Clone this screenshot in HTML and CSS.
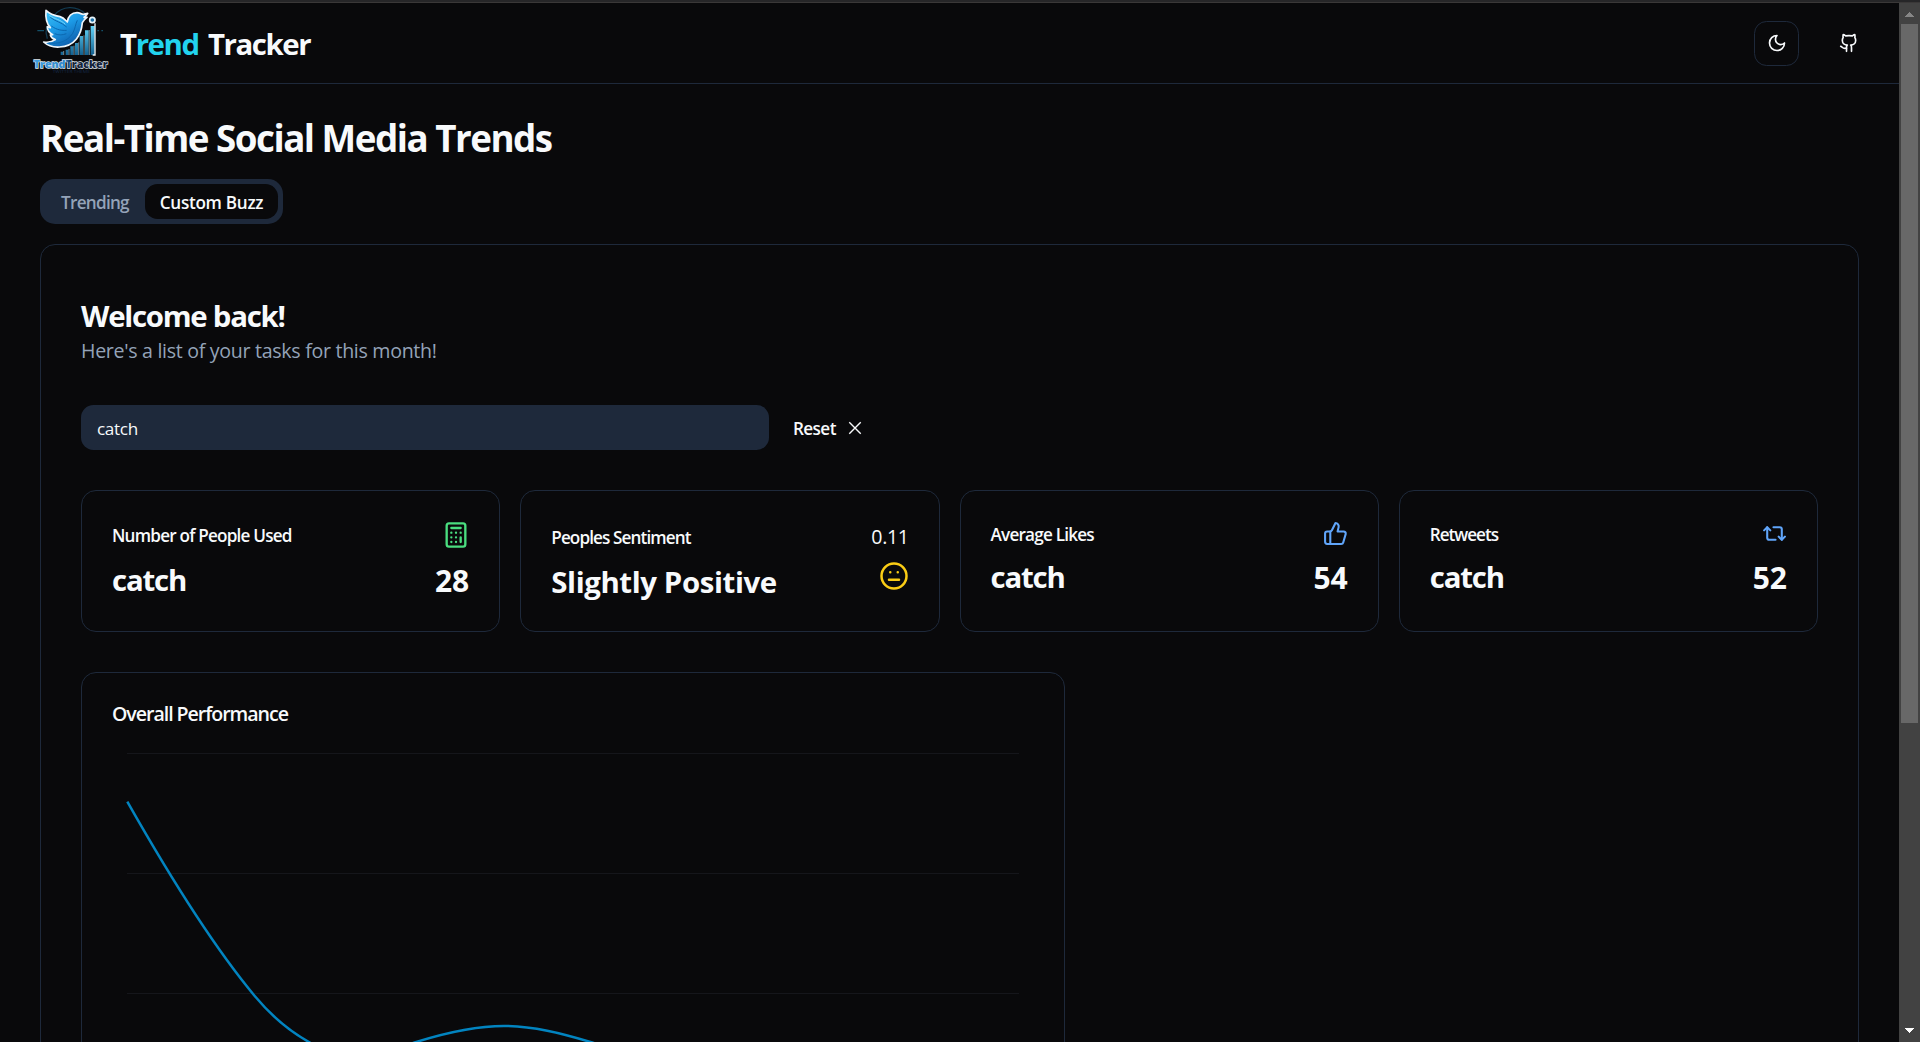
FILE: index.html
```
<!DOCTYPE html>
<html lang="en">
<head>
<meta charset="utf-8">
<title>Trend Tracker</title>
<link rel="stylesheet" href="styles.css">
</head>
<body>
<div class="window-edge"></div>
<div class="viewport">
  <div class="page">
    <header class="site-header">
      <svg class="logo" viewBox="33 24 234 198">
        <defs>
          <linearGradient id="bird" x1="0" y1="0" x2="0.6" y2="1">
            <stop offset="0" stop-color="#3cc4f8"/><stop offset="0.5" stop-color="#1c9ae6"/><stop offset="1" stop-color="#0d5aa8"/>
          </linearGradient>
          <linearGradient id="bars" x1="0" y1="0" x2="0" y2="1">
            <stop offset="0" stop-color="#62d4fa"/><stop offset="1" stop-color="#12608f"/>
          </linearGradient>
          <linearGradient id="word" x1="0" y1="0" x2="1" y2="0">
            <stop offset="0" stop-color="#3f9fe0"/><stop offset="0.42" stop-color="#2f86cc"/><stop offset="0.5" stop-color="#17243c"/><stop offset="1" stop-color="#14203a"/>
          </linearGradient>
        </defs>
        <path d="M103 46A62 62 0 0 1 196 42M80 80a66 66 0 0 0 2 36" fill="none" stroke="#123a50" stroke-width="4"/>
        <path d="M52 92h20M232 92h5M244 92h5" stroke="#145069" stroke-width="4"/>
        <g fill="url(#bars)">
          <path d="M122 155h7v10h-7zM137 149h8v16h-8zM151 139h9v26h-9zM165 129h9v36h-9zM179 108h10v57h-10zM195 91h11v74h-11zM212 78h12v87h-12z"/>
        </g>
        <path d="M131 165v-12M147 165v-18M162 165v-28M176 165v-38M192 165v-59M208 165V90" stroke="#a9cfe0" stroke-width="2"/>
        <path d="M225 70v95h-7" fill="none" stroke="#eef6fa" stroke-width="4"/>
        <circle cx="217" cy="60" r="8" fill="#1a6fa8" stroke="#e8f4fa" stroke-width="5"/>
        <path d="M78 31C90 43 105 47 120 50C131 53 136 60 142 66C144 49 155 38 171 38C180 38 184 43 190 43L203 40C200 46 196 48 192 52C196 52 199 51 201 52C195 56 191 61 187 68C184 103 166 139 118 141C100 142 84 138 71 126C83 128 96 126 106 119C99 117 93 112 91 105L98 104C88 98 82 90 82 80L91 83C80 71 76 53 78 31Z" fill="url(#bird)" stroke="#eef5fa" stroke-width="5" stroke-linejoin="round"/>
        <path d="M91 52c14 12 34 15 49 29M94 78c17 12 31 14 46 13M104 101c13 6 25 4 35 0M86 129c27 4 57-4 72-29c8-14 8-27 14-39" fill="none" stroke="#0b68b0" stroke-width="3"/>
        <path d="M88 46c16 12 33 12 48 27" fill="none" stroke="#7bdcfb" stroke-width="3"/>
        <text class="logo-word" x="41" y="204" textLength="222" lengthAdjust="spacingAndGlyphs">TrendTracker</text>
        <text class="logo-tag" x="98" y="219" textLength="112" lengthAdjust="spacingAndGlyphs">TWITTER THEME</text>
      </svg>
      <div class="brand"><span>T</span><span class="brand-accent">rend</span> <span>Tracker</span></div>
      <nav class="actions">
        <button class="icon-button outlined" aria-label="Theme">
          <svg class="icon i20" viewBox="0 0 24 24"><path d="M12 3a6 6 0 0 0 9 9 9 9 0 1 1-9-9Z"/></svg>
        </button>
        <button class="icon-button" aria-label="GitHub">
          <svg class="icon i20" viewBox="0 0 24 24"><path d="M15 22v-4a4.8 4.8 0 0 0-1-3.500c3 0 6-2 6-5.500.08-1.250-.27-2.480-1-3.500.28-1.150.28-2.350 0-3.500 0 0-1 0-3 1.500-2.640-.5-5.360-.5-8 0C6 2 5 2 5 2c-.3 1.150-.3 2.350 0 3.500A5.403 5.403 0 0 0 4 9c0 3.500 3 5.500 6 5.500-.39.49-.68 1.050-.85 1.650-.17.6-.22 1.230-.15 1.850v4"/><path d="M9 18c-4.510 2-5-2-7-2"/></svg>
        </button>
      </nav>
    </header>

    <main class="content">
      <h1 class="title">Real-Time Social Media Trends</h1>
      <div class="tabs">
        <button class="tab">Trending</button>
        <button class="tab tab-active">Custom Buzz</button>
      </div>

      <section class="panel">
        <h2 class="welcome">Welcome back!</h2>
        <p class="subtitle">Here's a list of your tasks for this month!</p>

        <div class="search">
          <div class="search-input">catch</div>
          <button class="reset"><span class="reset-label">Reset</span>
            <svg class="cross" viewBox="0 0 15 15"><path d="M3.200 3.200l8.600 8.600M11.800 3.200l-8.600 8.600"/></svg>
          </button>
        </div>

        <div class="stats">
          <article class="stat">
            <div class="stat-head">
              <h3 class="stat-title">Number of People Used</h3>
              <svg class="icon i28 green" viewBox="0 0 24 24"><rect width="16" height="20" x="4" y="2" rx="2"/><path d="M8 6h8M16 14v4M16 10h.01M12 10h.01M8 10h.01M12 14h.01M8 14h.01M12 18h.01M8 18h.01"/></svg>
            </div>
            <div class="stat-body"><span class="keyword">catch</span><span class="count">28</span></div>
          </article>
          <article class="stat">
            <div class="stat-head">
              <h3 class="stat-title sentiment">Peoples Sentiment</h3>
              <span class="score">0.11</span>
            </div>
            <div class="stat-body"><span class="mood">Slightly Positive</span>
              <svg class="icon i30 yellow" viewBox="0 0 24 24"><circle cx="12" cy="12" r="10"/><path d="M8 15h8M9 9h.01M15 9h.01"/></svg>
            </div>
          </article>
          <article class="stat">
            <div class="stat-head">
              <h3 class="stat-title">Average Likes</h3>
              <svg class="icon i25 blue" viewBox="0 0 24 24"><path d="M7 10v12"/><path d="M15 5.880 14 10h5.830a2 2 0 0 1 1.920 2.560l-2.330 8A2 2 0 0 1 17.500 22H4a2 2 0 0 1-2-2v-8a2 2 0 0 1 2-2h2.760a2 2 0 0 0 1.790-1.110L12 2a3.130 3.130 0 0 1 3 3.880Z"/></svg>
            </div>
            <div class="stat-body"><span class="keyword">catch</span><span class="count">54</span></div>
          </article>
          <article class="stat">
            <div class="stat-head">
              <h3 class="stat-title retweets">Retweets</h3>
              <svg class="icon i25 blue" viewBox="0 0 24 24"><path d="m2 9 3-3 3 3"/><path d="M13 18H7a2 2 0 0 1-2-2V6"/><path d="m22 15-3 3-3-3"/><path d="M11 6h6a2 2 0 0 1 2 2v10"/></svg>
            </div>
            <div class="stat-body"><span class="keyword">catch</span><span class="count">52</span></div>
          </article>
        </div>

        <article class="chart-card">
          <h3 class="chart-title">Overall Performance</h3>
          <svg class="chart" viewBox="112 743 922 437">
            <path class="grid-line" d="M127 753.500H1019M127 873.500H1019M127 993.500H1019M127 1113.500H1019"/>
            <path class="series" d="M127.300 801.700C169.800 876.700 212.200 945 254.700 996C272.800 1017.700 290.900 1032 309 1042C326.700 1054 344.300 1057 362 1057C380 1057 398 1047.600 416.300 1042C445.500 1032.900 474.800 1026 504 1026C532.800 1026 561.600 1033.400 590.400 1042C640 1057 690 1075 740 1085"/>
          </svg>
        </article>
      </section>
    </main>
  </div>

  <div class="scrollbar">
    <svg class="arrow" viewBox="0 0 9 5"><path fill="#868686" d="M4 0h1v1h1v1h1v1h1v1h1v1H0V4h1V3h1V2h1V1h1z"/></svg>
    <div class="thumb"></div>
    <svg class="arrow arrow-down" viewBox="0 0 9 5"><path fill="#fff" d="M0 0h9v1H8v1H7v1H6v1H5v1H4V4H3V3H2V2H1V1H0z"/></svg>
  </div>
</div>
</body>
</html>
```
FILE: styles.css
```
* { box-sizing: border-box; margin: 0; padding: 0; }

body {
  height: 1042px;
  overflow: hidden;
  background: #09090b;
  color: #f8fafc;
  font-family: "Open Sans", "Noto Sans", sans-serif;
}

button { border: 0; background: none; color: inherit; font: inherit; }

.window-edge { height: 3px; background: #262628; border-bottom: 1px solid #3a3838; }
.viewport { display: flex; height: 1039px; overflow: hidden; }
.page { width: 1899px; }

/* header */
.site-header {
  display: flex;
  align-items: center;
  height: 81px;
  padding: 0 27.500px 0 31px;
  border-bottom: 1px solid #1e293b;
}
.logo { width: 78px; height: 66px; margin-top: -4px; overflow: visible; }
.logo-word {
  font-size: 33px;
  font-weight: 800;
  fill: url(#word);
  stroke: #dfeaf2;
  stroke-width: 4px;
  paint-order: stroke;
}
.logo-tag { font-size: 10px; fill: #16294a; }
.brand {
  margin-left: 11px;
  padding-top: 1px;
  font-size: 29.400px;
  font-weight: 700;
  line-height: 40px;
  letter-spacing: -1.400px;
  word-spacing: 3px;
}
.brand-accent { color: #22d3ee; }
.actions { display: flex; gap: 27.500px; margin-left: auto; }
.icon-button {
  display: flex;
  align-items: center;
  justify-content: center;
  width: 45px;
  height: 45px;
  border-radius: 12.500px;
}
.outlined { border: 1px solid #1e293b; }

/* icons */
.icon {
  display: block;
  flex: none;
  fill: none;
  stroke: currentColor;
  stroke-width: 2;
  stroke-linecap: round;
  stroke-linejoin: round;
}
.i20 { width: 20px; height: 20px; }
.i25 { width: 25px; height: 25px; }
.i28 { width: 28px; height: 28px; margin-right: -0.800px; }
.i30 { width: 30px; height: 30px; }
.green { color: #4ade80; }
.yellow { color: #facc15; }
.blue { color: #60a5fa; }

/* heading and tabs */
.content { padding: 32px 40px 0; }
.title {
  font-size: 36.750px;
  font-weight: 700;
  line-height: 45px;
  letter-spacing: -1.500px;
}
.tabs {
  display: inline-flex;
  height: 45px;
  margin: 18px 0 20px;
  padding: 5px;
  border-radius: 15px;
  background: #1e293b;
  color: #94a3b8;
  vertical-align: top;
}
.tab {
  width: 100px;
  padding-top: 1px;
  border-radius: 12.500px;
  font-size: 17.150px;
  font-weight: 600;
  line-height: 25px;
  letter-spacing: -0.740px;
}
.tab-active {
  width: 133px;
  background: #09090b;
  color: #f8fafc;
  letter-spacing: -0.300px;
}

/* panel */
.panel {
  height: 1200px;
  padding: 51px 40px 40px;
  border: 1px solid #1e293b;
  border-radius: 15px;
}
.welcome {
  font-size: 29.400px;
  font-weight: 700;
  line-height: 40px;
  letter-spacing: -1.260px;
}
.subtitle {
  color: #94a3b8;
  font-size: 19.600px;
  line-height: 30px;
  letter-spacing: -0.300px;
}

.search { display: flex; gap: 10px; margin: 39px 0 40px; }
.search-input {
  width: 688px;
  height: 45px;
  padding: 0 16px;
  border-radius: 12.500px;
  background: #1e293b;
  font-size: 17.150px;
  line-height: 47px;
  letter-spacing: -0.340px;
}
.reset {
  display: flex;
  align-items: center;
  gap: 9.500px;
  padding-left: 14px;
  font-size: 17.150px;
  font-weight: 600;
  letter-spacing: -0.600px;
}
.reset-label { padding-top: 2px; }
.cross {
  width: 20px;
  height: 20px;
  fill: none;
  stroke: currentColor;
  stroke-width: 1.050;
}

.stats { display: grid; grid-template-columns: repeat(4, 1fr); gap: 20px; }
.stat {
  height: 142px;
  padding: 30px;
  border: 1px solid #1e293b;
  border-radius: 15px;
}
.stat-head { display: flex; align-items: center; justify-content: space-between; }
.stat-title {
  padding-top: 2px;
  font-size: 17.150px;
  font-weight: 600;
  line-height: 18px;
  letter-spacing: -0.800px;
}
.sentiment { padding-top: 3px; letter-spacing: -0.900px; }
.retweets { letter-spacing: -1.020px; }
.score { padding-top: 1px; margin-bottom: -1px; font-size: 19.600px; line-height: 30px; letter-spacing: -0.400px; }
.stat-body {
  display: flex;
  justify-content: space-between;
  margin-top: 10px;
  font-size: 29.400px;
  font-weight: 700;
  line-height: 43px;
}
.keyword { letter-spacing: -1.180px; }
.mood { letter-spacing: -0.390px; }
.count { font-size: 30px; }

/* chart */
.chart-card {
  width: 984px;
  height: 540px;
  margin-top: 40px;
  padding: 30px;
  border: 1px solid #1e293b;
  border-radius: 15px;
}
.chart-title {
  padding-top: 1px;
  font-size: 19.600px;
  font-weight: 600;
  line-height: 20px;
  letter-spacing: -1.050px;
}
.chart { display: block; width: 922px; height: 437px; margin-top: 19px; }
.grid-line { stroke: #15161b; stroke-width: 1; }
.series { fill: none; stroke: #0284c0; stroke-width: 2.500; }

/* scrollbar */
.scrollbar {
  display: flex;
  flex-direction: column;
  align-items: center;
  width: 21px;
  padding: 9px 1px 9px 0;
  background: #424242;
}
.arrow { width: 9px; height: 5px; }
.thumb { width: 17px; height: 699px; margin-top: 7px; background: #686868; }
.arrow-down { margin-top: auto; }
```
